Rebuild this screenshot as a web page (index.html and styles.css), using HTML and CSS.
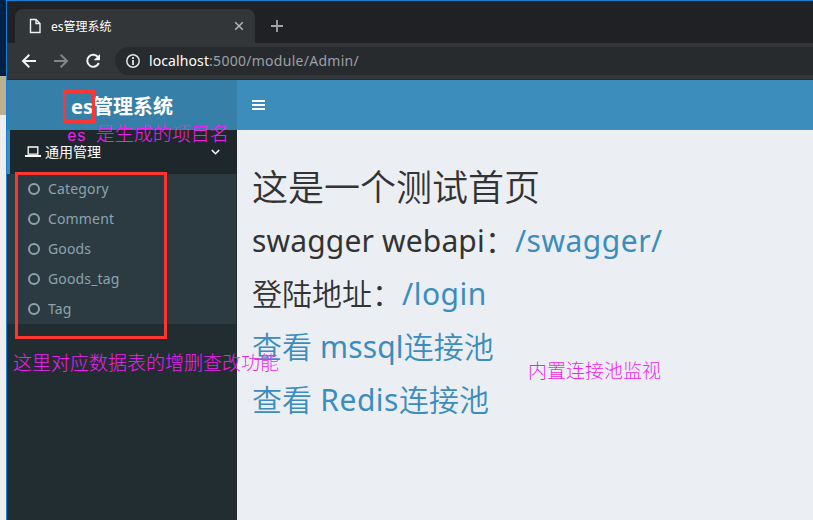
FILE: index.html
```html
<!DOCTYPE html>
<html lang="zh-CN">
<head>
<meta charset="utf-8">
<title>es管理系统</title>
<link rel="stylesheet" href="styles.css">
</head>
<body>
<div class="desktop">
  <div class="backdrop"><i class="navy"></i><i class="tan"></i><i class="pale"></i></div>
  <div class="window">
    <div class="tabs">
      <div class="tab">
        <svg class="file" width="12" height="16" viewBox="0 0 12 16"><path d="M1.5 1.5h5.500l4 4v9h-9.500zM7 1.500v4h4" fill="none" stroke="#f1f1f1" stroke-width="1.4"/></svg>
        <span class="tab-title">es管理系统</span>
        <svg class="close" width="10" height="10" viewBox="0 0 10 10"><path d="M1.200 1.200l7.600 7.600M8.800 1.200l-7.600 7.600" stroke="#b4b7ba" stroke-width="1.500"/></svg>
      </div>
      <svg class="plus" width="12" height="12" viewBox="0 0 12 12"><path d="M6 0v12M0 6h12" stroke="#a0a3a7" stroke-width="1.800"/></svg>
    </div>
    <div class="toolbar">
      <svg class="nav-icon" width="16" height="16" viewBox="0 0 16 16"><path d="M15 8H2.500M8.300 1.700L2 8l6.300 6.300" fill="none" stroke="#f3f4f5" stroke-width="2"/></svg>
      <svg class="nav-icon" width="16" height="16" viewBox="0 0 16 16"><path d="M1 8h12.500M7.700 1.700L14 8l-6.300 6.300" fill="none" stroke="#838689" stroke-width="2"/></svg>
      <svg class="nav-icon" width="16" height="16" viewBox="0 0 16 16"><path d="M13.300 4.500A6 6 0 1 0 13.800 10" fill="none" stroke="#f3f4f5" stroke-width="2"/><path d="M15 1v6.300H8.700z" fill="#f3f4f5"/></svg>
      <div class="address">
        <svg width="14" height="14" viewBox="0 0 14 14"><circle cx="7" cy="7" r="6.200" fill="none" stroke="#e2e4e6" stroke-width="1.500"/><path d="M7 3v2M7 6v5" stroke="#e2e4e6" stroke-width="1.800"/></svg>
        <span class="url"><b>localhost</b>:5000/module/Admin/</span>
      </div>
    </div>
    <div class="page">
      <aside class="sidebar">
        <div class="brand"><span class="brand-text">es管理系统</span></div>
        <div class="group">
          <svg class="laptop" width="16" height="12" viewBox="0 0 16 12"><path d="M3.200 1h9.600v7.200H3.200z" fill="none" stroke="#fff" stroke-width="1.300"/><path d="M0 9h16v1.500q0 .5-1 .5H1q-1 0-1-.5z" fill="#fff"/></svg>
          <span>通用管理</span>
          <svg class="chev" width="9" height="6" viewBox="0 0 9 6"><path d="M.8 1L4.500 4.700 8.200 1" fill="none" stroke="#fff" stroke-width="1.600"/></svg>
        </div>
        <ul class="menu">
          <li><i></i><span>Category</span></li>
          <li><i></i><span>Comment</span></li>
          <li><i></i><span>Goods</span></li>
          <li><i></i><span>Goods_tag</span></li>
          <li><i></i><span>Tag</span></li>
        </ul>
      </aside>
      <main>
        <div class="topbar"><svg width="13" height="10" viewBox="0 0 13 10"><path d="M0 1h13M0 5h13M0 9h13" stroke="#fff" stroke-width="2"/></svg></div>
        <div class="content">
          <h1>这是一个测试首页</h1>
          <h2><span class="lt">swagger webapi</span>：<a class="lt wide">/swagger/</a></h2>
          <h2>登陆地址：<a class="lt wide">/login</a></h2>
          <h2><a>查看<span class="lt"> mssql</span>连接池</a></h2>
          <h2><a>查看<span class="lt wide"> Redis</span>连接池</a></h2>
        </div>
      </main>
    </div>
  </div>
  <div class="box box-name"></div>
  <div class="box box-menu"></div>
  <div class="note note-name"><span>es </span>是生成的项目名</div>
  <div class="note note-menu">这里对应数据表的增删查改功能</div>
  <div class="note note-pool">内置连接池监视</div>
</div>
</body>
</html>
```
FILE: styles.css
```css
* { box-sizing: border-box; }
body { margin: 0; font-family: "Noto Sans", "Noto Sans CJK SC", sans-serif; }
svg { display: block; flex: none; }
.desktop { position: relative; display: flex; width: 813px; height: 520px; overflow: hidden; }
.backdrop { width: 6px; display: flex; flex-direction: column; }
.navy { height: 76px; background: #002143; }
.tan { height: 39px; background: #bfaf91; }
.pale { flex: 1; background: #eee; }
.window { flex: 1; display: flex; flex-direction: column; border-left: 1px solid #1580d8; border-top: 1px solid #1580d8; background: #202124; }
.tabs { height: 42px; display: flex; align-items: flex-end; padding-left: 8px; }
.tab { width: 240px; height: 34px; background: #323639; border-radius: 8px 8px 0 0; display: flex; align-items: center; padding: 0 11px 0 14px; }
.tab-title { flex: 1; margin: 2px 0 0 10px; font: 12px/16px "Noto Sans", "Noto Sans CJK SC", sans-serif; color: #fff; }
.plus { margin: 0 0 11px 16px; }
.toolbar { height: 37px; background: #323639; border-bottom: 1px solid #27292b; display: flex; align-items: center; padding-left: 14px; }
.nav-icon { margin-right: 16px; }
.address { flex: 1; height: 28px; margin-left: -2px; background: #282b2e; border-radius: 14px 0 0 14px; display: flex; align-items: center; padding-left: 11px; }
.url { margin-left: 9px; font-size: 14px; line-height: 20px; color: #9aa0a6; letter-spacing: .28px; }
.url b { font-weight: 400; color: #fff; letter-spacing: .1px; }
.page { flex: 1; display: flex; }
.sidebar { width: 230px; background: #222d32; }
.brand { height: 50px; background: #367fa9; color: #fff; text-align: center; font-weight: 700; font-size: 20px; line-height: 53px; }
.group { height: 44px; background: #1e282c; border-left: 3px solid #3c8dbc; display: flex; align-items: center; padding: 0 17px 0 15px; color: #fff; font-size: 14px; }
.group span { flex: 1; margin: -2px 0 0 4px; }
.menu { margin: 0; padding: 0; list-style: none; background: #2c3b41; border-right: 1px solid #222d32; }
.menu li { height: 30px; display: flex; align-items: center; padding-left: 21px; color: #8aa4af; font-size: 14px; letter-spacing: .15px; }
.menu span { margin-top: -2px; }
.menu i { width: 12px; height: 12px; border: 2px solid #8aa4af; border-radius: 50%; margin-right: 8px; }
main { flex: 1; background: #ebeff4; color: #333; }
.topbar { height: 50px; background: #3c8dbc; display: flex; align-items: center; padding-left: 15px; }
.content { padding: 35px 15px 0; }
h1, h2 { margin: 0; font-weight: 350; white-space: pre; font-family: "Noto Sans CJK SC", sans-serif; }
h1 { font-size: 36px; line-height: 40px; height: 40px; margin-bottom: 18px; }
h2 { font-size: 30px; line-height: 33px; height: 33px; margin-bottom: 20px; }
.lt { font-family: "Noto Sans", sans-serif; font-weight: 400; letter-spacing: .15px; }
.wide { letter-spacing: .5px; }
a { color: #3c8dbc; }
.box { position: absolute; border: 3px solid #fd3533; }
.box-name { left: 63px; top: 90px; width: 32px; height: 33px; }
.box-menu { left: 15px; top: 172px; width: 152px; height: 167px; }
.note { position: absolute; color: #f01ff0; font: 300 19px/24px "Noto Sans CJK SC", sans-serif; white-space: pre; }
.note span { font: 16px/24px "Liberation Mono", monospace; }
.note-name { left: 67px; top: 121px; }
.note-menu { left: 13px; top: 350px; }
.note-pool { left: 528px; top: 358px; }
```
